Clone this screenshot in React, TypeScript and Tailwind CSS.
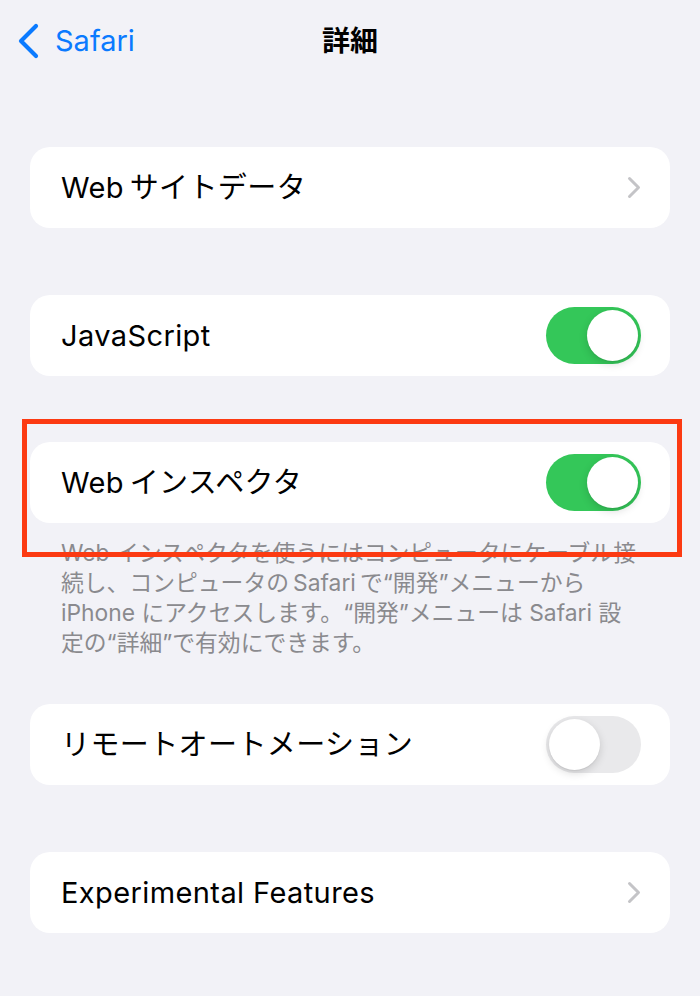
import type { ReactNode } from "react";

const font = {
  fontFamily: '"Inter", "Noto Sans CJK JP", sans-serif',
};

const Chevron = () => (
  <svg width="14" height="23" viewBox="0 0 14 23" fill="none">
    <polyline
      points="2.5,2.5 11.5,11.5 2.5,20.5"
      stroke="#c4c4c7"
      strokeWidth="3"
      strokeLinecap="round"
      strokeLinejoin="round"
    />
  </svg>
);

const Toggle = ({ on }: { on: boolean }) => (
  <div
    className={`relative w-[95px] h-[57px] rounded-full ${
      on ? "bg-[#34c759]" : "bg-[#e9e9eb]"
    }`}
  >
    <div
      className={`absolute top-[3px] w-[51px] h-[51px] rounded-full bg-white shadow-[0_3px_8px_rgba(0,0,0,0.15),0_1px_1px_rgba(0,0,0,0.06)] ${
        on ? "right-[3px]" : "left-[3px]"
      }`}
    />
  </div>
);

const Card = ({
  label,
  right,
  className = "",
}: {
  label: string;
  right: ReactNode;
  className?: string;
}) => (
  <div
    className={`h-[81px] rounded-[20px] bg-white flex items-center justify-between pl-[31px] pr-[29px] ${className}`}
  >
    <span className="text-[29px] text-black tracking-[0.4px]">{label}</span>
    {right}
  </div>
);

export default function App() {
  return (
    <div
      className="relative w-[700px] min-h-[996px] bg-[#f2f2f7] overflow-hidden"
      style={font}
    >
      {/* nav bar */}
      <div className="grid grid-cols-[1fr_auto_1fr] items-center h-[82px]">
        <div className="flex items-center gap-[16px] pl-[17px]">
          <svg width="22" height="36" viewBox="0 0 22 36" fill="none">
            <polyline
              points="19,3 4,18 19,33"
              stroke="#0a7aff"
              strokeWidth="4.2"
              strokeLinecap="round"
              strokeLinejoin="round"
            />
          </svg>
          <span className="text-[29px] text-[#0a7aff]">Safari</span>
        </div>
        <span className="text-[28px] font-semibold text-black">詳細</span>
        <div />
      </div>

      <div className="px-[30px] pt-[65px]">
        <Card label={"Web\u2009サイトデータ"} right={<Chevron />} />
        <Card label="JavaScript" right={<Toggle on />} className="mt-[67px]" />
        <Card label={"Web\u2009インスペクタ"} right={<Toggle on />} className="mt-[66px]" />
        <p className="mt-[15px] pl-[31px] text-[22.8px] leading-[30px] text-[#8a8a8e]">
          Web インスペクタを使うにはコンピュータにケーブル接
          <br />
          {"続し、コンピュータの\u2009Safari\u2009で“開発”メニューから"}
          <br />
          iPhone にアクセスします。“開発”メニューは Safari 設
          <br />
          定の“詳細”で有効にできます。
        </p>
        <Card
          label="リモートオートメーション"
          right={<Toggle on={false} />}
          className="mt-[46px]"
        />
        <Card
          label="Experimental Features"
          right={<Chevron />}
          className="mt-[67px]"
        />
      </div>

      {/* red highlight annotation */}
      <div className="absolute left-[22px] top-[419px] w-[660px] h-[138px] border-[5px] border-[#fc3a12]" />
    </div>
  );
}
